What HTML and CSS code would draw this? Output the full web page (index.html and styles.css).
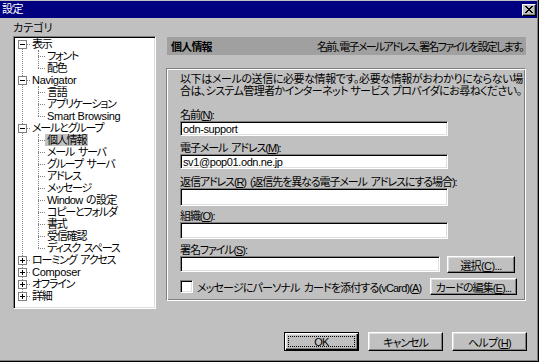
FILE: index.html
```html
<!DOCTYPE html>
<html lang="ja">
<head>
  <meta charset="UTF-8" />
  <title>設定</title>
  <link rel="stylesheet" href="styles.css">
</head>
<body>
<div class="window">
  <div class="titlebar">
    <span class="title">設定</span>
    <button class="close"><svg width="8" height="7" viewBox="0 0 8 7"><path d="M0 0h2v1h1v1h2V1h1V0h2v1H7v1H6v1H5v1h1v1h1v1h1v1H6V6H5V5H3v1H2v1H0V6h1V5h1V4h1V3H2V2H1V1H0z" fill="#000"/></svg></button>
  </div>

  <div class="main">
    <div class="cats">
      <div class="cats-label">カテゴリ</div>
      <div class="treebox">
        <ul class="tree">
          <li>
            <div class="row"><span class="exp"></span><span class="stub"></span><span class="label">表示</span></div>
            <ul class="kids">
              <li class="row"><span class="kstub"></span><span class="label">フォント</span></li>
              <li class="row"><span class="kstub"></span><span class="label">配色</span></li>
            </ul>
          </li>
          <li>
            <div class="row"><span class="exp"></span><span class="stub"></span><span class="label latin">Navigator</span></div>
            <ul class="kids">
              <li class="row"><span class="kstub"></span><span class="label">言語</span></li>
              <li class="row"><span class="kstub"></span><span class="label">アプリケーション</span></li>
              <li class="row"><span class="kstub"></span><span class="label latin">Smart Browsing</span></li>
            </ul>
          </li>
          <li>
            <div class="row"><span class="exp"></span><span class="stub"></span><span class="label">メールとグループ</span></div>
            <ul class="kids">
              <li class="row"><span class="kstub"></span><span class="label sel">個人情報</span></li>
              <li class="row"><span class="kstub"></span><span class="label">メール サーバ</span></li>
              <li class="row"><span class="kstub"></span><span class="label">グループ サーバ</span></li>
              <li class="row"><span class="kstub"></span><span class="label">アドレス</span></li>
              <li class="row"><span class="kstub"></span><span class="label">メッセージ</span></li>
              <li class="row"><span class="kstub"></span><span class="label mixed">Window の設定</span></li>
              <li class="row"><span class="kstub"></span><span class="label">コピーとフォルダ</span></li>
              <li class="row"><span class="kstub"></span><span class="label">書式</span></li>
              <li class="row"><span class="kstub"></span><span class="label">受信確認</span></li>
              <li class="row"><span class="kstub"></span><span class="label">ディスク スペース</span></li>
            </ul>
          </li>
          <li><div class="row"><span class="exp plus"></span><span class="stub"></span><span class="label">ローミング アクセス</span></div></li>
          <li><div class="row"><span class="exp plus"></span><span class="stub"></span><span class="label latin">Composer</span></div></li>
          <li><div class="row"><span class="exp plus"></span><span class="stub"></span><span class="label">オフライン</span></div></li>
          <li><div class="row"><span class="exp plus"></span><span class="stub"></span><span class="label">詳細</span></div></li>
        </ul>
      </div>
    </div>

    <div class="pane">
      <div class="pane-head">
        <b class="head-title">個人情報</b>
        <span class="head-note">名前、電子メールアドレス、署名ファイルを設定します。</span>
      </div>

      <div class="group">
        <p class="intro">以下はメールの送信に必要な情報です。必要な情報がおわかりにならない場<br><span class="intro-2">合は、システム管理者かインターネット サービス プロバイダにお尋ねください。</span></p>

        <label class="flabel m12">名前(<u>N</u>):</label>
        <input class="text h15" value="odn-support">

        <label class="flabel m6">電子メール アドレス(<u>M</u>):</label>
        <input class="text h15" value="sv1@pop01.odn.ne.jp">

        <label class="flabel m7">返信アドレス(<u>R</u>) (返信先を異なる電子メール アドレスにする場合):</label>
        <input class="text h18" value="">

        <label class="flabel m4">組織(<u>O</u>):</label>
        <input class="text h17" value="">

        <label class="flabel m5">署名ファイル(<u>S</u>):</label>
        <div class="sig-row">
          <input class="text sig" value="">
          <button class="btn pick">選択(<u>C</u>)...</button>
        </div>

        <div class="card-row">
          <span class="check"></span>
          <span class="card-text">メッセージにパーソナル カードを添付する(vCard)(<u>A</u>)</span>
          <button class="btn card">カードの編集(<u>E</u>)...</button>
        </div>
      </div>
    </div>
  </div>

  <div class="footer">
    <button class="btn wide default">OK</button>
    <button class="btn wide tight">キャンセル</button>
    <button class="btn wide">ヘルプ(<u>H</u>)</button>
  </div>
</div>
</body>
</html>
```

FILE: styles.css
```css
:root {
  --face: #c0c0c0;
  --shadow: #808080;
  --light: #dfdfdf;
  --navy: #000080;
}

body {
  margin: 0;
  overflow: hidden;
  font-family: "Liberation Sans", "Noto Sans CJK JP", sans-serif;
  font-size: 11px;
  font-feature-settings: "palt" 1;
  color: #000;
}

.window {
  width: 539px;
  height: 362px;
  box-sizing: border-box;
  padding-top: 1px;
  background: var(--face);
  border-right: 1px solid #000;
  border-bottom: 1px solid #000;
  box-shadow: inset -1px -1px var(--shadow);
}

.titlebar {
  height: 17px;
  margin-right: 1px;
  background: var(--navy);
  display: flex;
  align-items: center;
  justify-content: space-between;
}

.title {
  color: #fff;
  padding-left: 2px;
  line-height: 17px;
  letter-spacing: -0.5px;
}

.close {
  width: 14px;
  height: 12px;
  margin-right: 1px;
  padding: 0;
  display: flex;
  align-items: center;
  justify-content: center;
  background: var(--face);
  border: 1px solid;
  border-color: #fff #000 #000 #fff;
  box-shadow: inset -1px -1px var(--shadow);
}

.main {
  display: flex;
  align-items: flex-start;
  padding: 3px 0 0 13px;
}

.cats-label {
  line-height: 14px;
  height: 14px;
}

.treebox {
  margin-top: 1px;
  width: 143px;
  height: 273px;
  box-sizing: border-box;
  background: #fff;
  border: 1px solid;
  border-color: var(--shadow) #fff #fff var(--shadow);
  box-shadow: inset 1px 1px #000, inset -1px -1px var(--light);
  padding: 1px;
  overflow: hidden;
}

.tree, .kids {
  list-style: none;
  margin: 0;
  padding: 0;
  position: relative;
}

.tree::before {
  content: "";
  position: absolute;
  left: 7px;
  top: 6px;
  bottom: 6px;
  border-left: 1px dotted var(--shadow);
}

.kids::before {
  content: "";
  position: absolute;
  left: 23px;
  top: 0;
  bottom: 6px;
  border-left: 1px dotted var(--shadow);
}

.row {
  height: 12px;
  display: flex;
  align-items: center;
  white-space: nowrap;
}

.exp {
  position: relative;
  width: 9px;
  height: 9px;
  margin-left: 3px;
  box-sizing: border-box;
  border: 1px solid var(--shadow);
  background: #fff;
}

.exp::before {
  content: "";
  position: absolute;
  left: 1px;
  top: 3px;
  width: 5px;
  height: 1px;
  background: #000;
}

.exp.plus::after {
  content: "";
  position: absolute;
  left: 3px;
  top: 1px;
  width: 1px;
  height: 5px;
  background: #000;
}

.stub {
  width: 3px;
  border-top: 1px dotted var(--shadow);
}

.kstub {
  width: 7px;
  margin-left: 23px;
  border-top: 1px dotted var(--shadow);
}

.label {
  padding: 0 2px;
  line-height: 12px;
  letter-spacing: -1.2px;
  word-spacing: 2px;
}

.label.latin {
  letter-spacing: -0.3px;
  word-spacing: 0;
}

.label.mixed {
  letter-spacing: -0.6px;
  word-spacing: 1px;
}

.label.sel {
  background: var(--face);
}

.pane {
  width: 360px;
  margin: 16px 0 0 10px;
}

.pane-head {
  height: 18px;
  margin-left: 1px;
  padding: 0 3px 0 4px;
  background: #a0a0a0;
  display: flex;
  align-items: center;
  justify-content: space-between;
  white-space: nowrap;
}

.head-title {
  letter-spacing: -0.8px;
}

.head-note {
  letter-spacing: -1.7px;
}

.group {
  margin-top: 13px;
  height: 233px;
  box-sizing: border-box;
  padding: 4px 8px 0 13px;
  border: 1px solid;
  border-color: var(--shadow) #fff #fff var(--shadow);
  box-shadow: inset 1px 1px #fff, inset -1px -1px var(--shadow);
}

.intro {
  margin: 0;
  line-height: 12px;
  white-space: nowrap;
  letter-spacing: -0.4px;
}

.intro-2 {
  letter-spacing: -0.6px;
}

.flabel {
  display: block;
  line-height: 12px;
  white-space: nowrap;
  letter-spacing: -1.1px;
  word-spacing: 2px;
}

.m12 { margin-top: 12px; }
.m7 { margin-top: 7px; }
.m6 { margin-top: 6px; }
.m5 { margin-top: 5px; }
.m4 { margin-top: 4px; }

.text {
  display: block;
  width: 268px;
  box-sizing: border-box;
  margin: 0;
  padding: 0 2px;
  font: inherit;
  font-feature-settings: "palt" 1;
  line-height: 11px;
  letter-spacing: -0.4px;
  background: #fff;
  border: 1px solid;
  border-color: var(--shadow) #fff #fff var(--shadow);
  box-shadow: inset 1px 1px #000, inset -1px -1px var(--light);
  outline: none;
}

.h15 { height: 15px; }
.h17 { height: 17px; }
.h18 { height: 18px; }

.sig-row {
  display: flex;
  align-items: flex-start;
}

.text.sig {
  width: 260px;
  height: 16px;
}

.btn {
  position: relative;
  height: 17px;
  padding: 0;
  font: inherit;
  font-feature-settings: "palt" 1;
  color: #000;
  background: var(--face);
  border: 1px solid;
  border-color: #fff #000 #000 #fff;
  box-shadow: inset -1px -1px var(--shadow), inset 1px 1px var(--light);
  white-space: nowrap;
  letter-spacing: -0.6px;
}

.btn.pick {
  width: 68px;
  margin-left: 7px;
}

.card-row {
  margin-top: 5px;
  height: 17px;
  display: flex;
  align-items: center;
}

.check {
  width: 13px;
  height: 13px;
  box-sizing: border-box;
  background: #fff;
  border: 1px solid;
  border-color: var(--shadow) #fff #fff var(--shadow);
  box-shadow: inset 1px 1px #000, inset -1px -1px var(--light);
}

.card-text {
  margin-left: 4px;
  white-space: nowrap;
  letter-spacing: -0.85px;
  word-spacing: 2px;
}

.btn.card {
  width: 87px;
  margin-left: auto;
  letter-spacing: -0.9px;
}

.footer {
  margin-top: 23px;
  padding-right: 11px;
  display: flex;
  justify-content: flex-end;
  gap: 9px;
}

.btn.wide {
  width: 75px;
  height: 19px;
}

.btn.tight {
  letter-spacing: -1px;
}

.btn.default {
  border-color: #000;
  box-shadow: inset 1px 1px #fff, inset -1px -1px #000, inset -2px -2px var(--shadow), inset 2px 2px var(--light);
}

.btn.default::after {
  content: "";
  position: absolute;
  inset: 3px;
  border: 1px dotted #000;
}
```
